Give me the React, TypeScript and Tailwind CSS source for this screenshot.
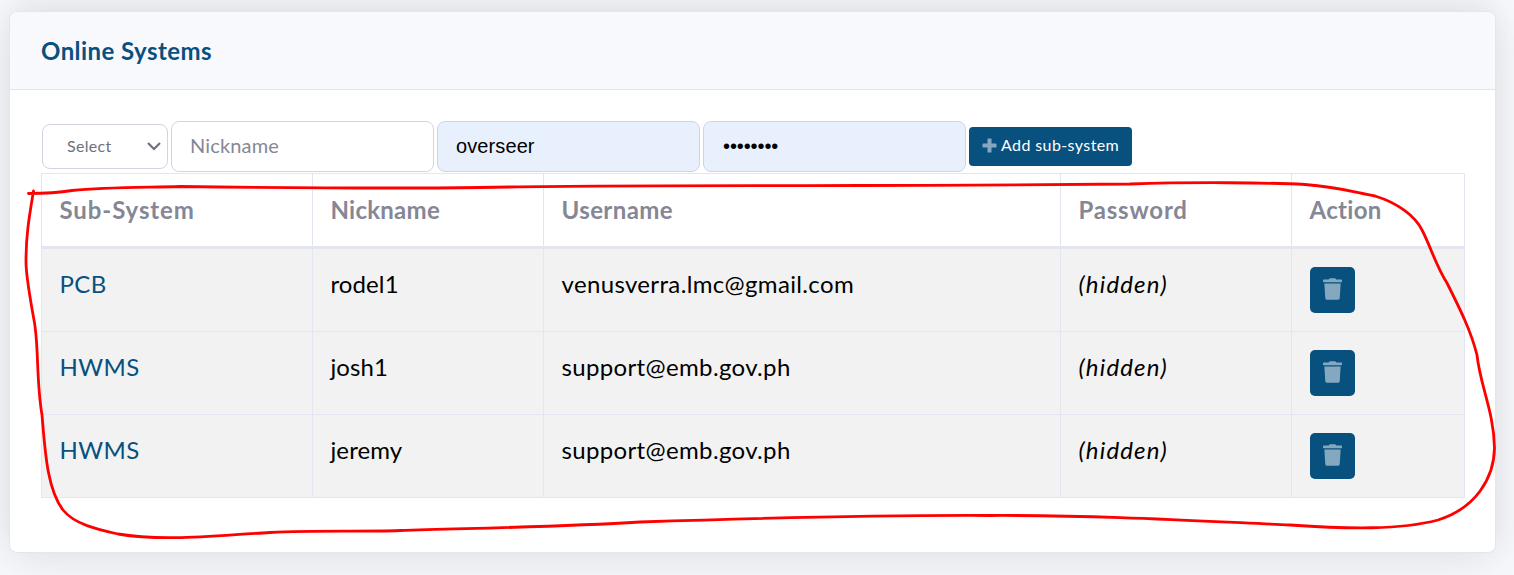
import React from "react";

const rows = [
  ["PCB", "rodel1", "venusverra.lmc@gmail.com"],
  ["HWMS", "josh1", "support@emb.gov.ph"],
  ["HWMS", "jeremy", "support@emb.gov.ph"],
];

const th = "border-r border-b-3 border-[#e3e6f0] pl-[17.5px] pt-[18px] text-left align-top font-bold leading-[35px]";
const td = "border-r border-b border-[#e3e6f0] pl-[17.5px] pt-[18px] align-top";
const field = "h-[51px] rounded-[8px] border border-[#d1d3e2] pl-[18px] flex items-center";

function Trash() {
  return (
    <svg className="block" width="19" height="22" viewBox="0 0 448 512" fill="currentColor">
      <path d="M432 32H312l-9.400-18.700A24 24 0 0 0 281.100 0H166.800a23.720 23.720 0 0 0-21.400 13.300L136 32H16A16 16 0 0 0 0 48v32a16 16 0 0 0 16 16h416a16 16 0 0 0 16-16V48a16 16 0 0 0-16-16zM32 128l21.200 339a48 48 0 0 0 47.900 45h245.800a48 48 0 0 0 47.900-45L416 128z" />
    </svg>
  );
}

export default function App() {
  return (
    <div className="relative h-[575px] w-[1514px] overflow-hidden bg-[#f8f9fc] pt-[11px] pl-[9px] font-['Lato','Open_Sans',sans-serif] text-[24px] text-black">
      <section className="h-[542px] w-[1487px] overflow-hidden rounded-[8px] border border-[#e3e6f0] bg-white shadow-[0_4px_48px_0_rgba(58,59,69,0.15),0_-14px_24px_-4px_rgba(58,59,69,0.04)]">
        <header className="flex h-[78px] items-center border-b border-[#e3e6f0] bg-[#f8f9fc] pl-[31px]">
          <h6 className="text-[24px] font-bold leading-none tracking-[0.44px] text-[#08507e]">Online Systems</h6>
        </header>
        <div className="pl-[31px] pt-[31px]">
          <div className="flex h-[52px] items-start pl-px">
            <div className="mt-[3px] flex h-[45px] w-[126px] items-center justify-between rounded-[8px] border border-[#d1d3e2] pl-[24px] pr-[6px] text-[#6e707e]">
              <span className="mb-[2px] text-[16px] tracking-[0.3px]">Select</span>
              <svg width="14" height="9" viewBox="0 0 14 9" fill="none" stroke="currentColor" strokeWidth="2.2">
                <path d="M1 1l6 6 6-6" />
              </svg>
            </div>
            <div className={`${field} ml-[3px] w-[263px] bg-white text-[#858796]`}>
              <span className="mb-[3px] text-[20px] tracking-[0.15px]">Nickname</span>
            </div>
            <div className={`${field} ml-[3px] w-[263px] bg-[#e8f0fe]`}>
              <span className="mb-[2px] font-['Liberation_Sans',sans-serif] text-[20px] tracking-[0.1px]">overseer</span>
            </div>
            <div className={`${field} ml-[3px] w-[263px] bg-[#e8f0fe]`}>
              <span className="mb-[2px] pl-px font-['Liberation_Sans',sans-serif] text-[20px] tracking-[-0.1px]">••••••••</span>
            </div>
            <button className="ml-[3px] mt-[6px] flex h-[39px] w-[163px] items-center rounded-[4px] bg-[#08507e] pl-[13px] text-white">
              <svg width="15" height="15" viewBox="0 0 15 15" className="mb-[3px] text-[#84a8bf]" fill="currentColor">
                <path d="M6 .5h3q.5 0 .5.500v4.500H14q.5 0 .5.500v3q0 .5-.5.500H9.500V14q0 .5-.5.500H6q-.5 0-.5-.5V9.500H1q-.5 0-.5-.5V6q0-.5.5-.5h4.500V1q0-.5.5-.5z" />
              </svg>
              <span className="mb-[3px] ml-[4px] whitespace-nowrap text-[16px] tracking-[0.4px]">Add sub-system</span>
            </button>
          </div>
          <table className="w-[1424px] table-fixed border-separate border-spacing-0 border-l border-t border-[#e3e6f0]">
            <colgroup>
              <col className="w-[271px]" />
              <col className="w-[231px]" />
              <col className="w-[517px]" />
              <col className="w-[231px]" />
              <col className="w-[173px]" />
            </colgroup>
            <thead>
              <tr className="h-[75px] text-[#858796]">
                <th className={`${th} tracking-[0.9px]`}>Sub-System</th>
                <th className={`${th} tracking-[0.25px]`}>Nickname</th>
                <th className={`${th} tracking-[0.4px]`}>Username</th>
                <th className={`${th} tracking-[0.8px]`}>Password</th>
                <th className={`${th} tracking-[0.3px]`}>Action</th>
              </tr>
            </thead>
            <tbody>
              {rows.map(([sys, nick, user], i) => (
                <tr key={i} className="h-[83px] bg-[#f2f2f2]">
                  <td className={`${td} leading-[34px] tracking-[0.4px] text-[#08507e]`}>{sys}</td>
                  <td className={`${td} leading-[34px] tracking-[0.1px]`}>{nick}</td>
                  <td className={`${td} leading-[34px] tracking-[0.35px]`}>{user}</td>
                  <td className={`${td} leading-[34px] tracking-[1.15px] italic`}>(hidden)</td>
                  <td className="border-r border-b border-[#e3e6f0] pt-[18px] pl-[18px] align-top">
                    <button className="flex h-[46px] w-[45px] items-center justify-center rounded-[5px] bg-[#08507e] pb-[2px] text-[#84a8bf]">
                      <Trash />
                    </button>
                  </td>
                </tr>
              ))}
            </tbody>
          </table>
        </div>
      </section>
      <svg className="pointer-events-none absolute left-0 top-0" width="1514" height="575" fill="none" stroke="#ff0000" strokeWidth="2.800" strokeLinecap="round" strokeLinejoin="round">
        <path d="M28.500 193.500C45 193.500 57 193 72 190.500C105 187 140 187.500 180 186.500C300 188 400 188.500 480 187.500C600 185 760 186 860 185.500C960 185.500 1080 185 1130 184C1190 182 1270 182.500 1305 184.500C1340 187 1357 193 1375 196C1398 203 1415 216 1422 230C1430 245 1436 266 1447 283C1460 309 1471 331 1477 355C1480 385 1494 412 1494.500 448C1494 478 1476 508 1438 520C1400 530 1350 529 1290 525C1200 521 1100 515 990 515.500C870 515 730 519 640 522C560 527 480 528 400 530.500C360 532 320 530 270 532.500C220 535 165 542 118 534C100 530 75 525 63 510C47 489 45 450 42 415C36 380 39 345 34 320C28 287 26 270 26 262C26 235 29 218 33.500 191" />
      </svg>
    </div>
  );
}
